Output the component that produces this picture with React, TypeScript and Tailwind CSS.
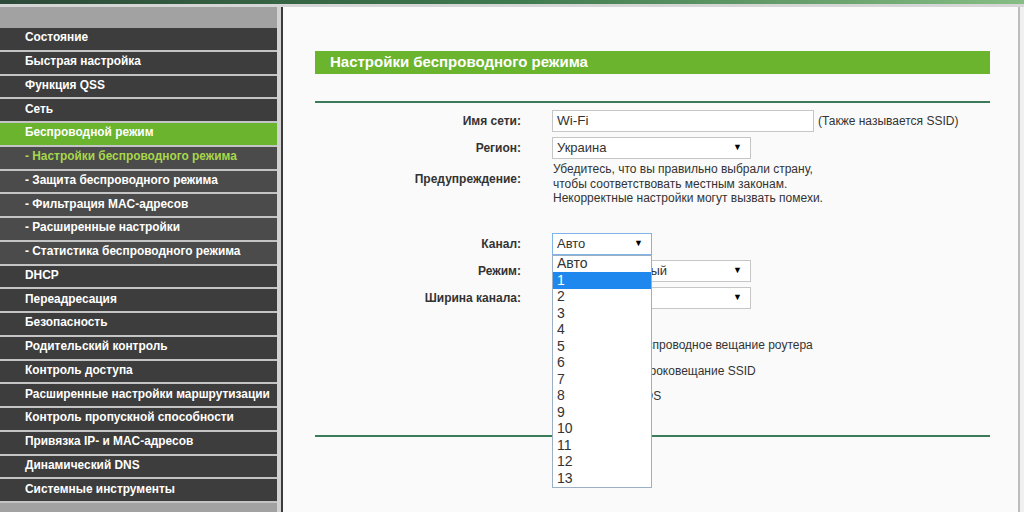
import React from "react";

const menu: { label: string; sub?: boolean; active?: boolean; current?: boolean }[] = [
  { label: "Состояние" },
  { label: "Быстрая настройка" },
  { label: "Функция QSS" },
  { label: "Сеть" },
  { label: "Беспроводной режим", active: true },
  { label: "- Настройки беспроводного режима", sub: true, current: true },
  { label: "- Защита беспроводного режима", sub: true },
  { label: "- Фильтрация MAC-адресов", sub: true },
  { label: "- Расширенные настройки", sub: true },
  { label: "- Статистика беспроводного режима", sub: true },
  { label: "DHCP" },
  { label: "Переадресация" },
  { label: "Безопасность" },
  { label: "Родительский контроль" },
  { label: "Контроль доступа" },
  { label: "Расширенные настройки маршрутизации" },
  { label: "Контроль пропускной способности" },
  { label: "Привязка IP- и MAC-адресов" },
  { label: "Динамический DNS" },
  { label: "Системные инструменты" },
];

const channels = ["Авто", "1", "2", "3", "4", "5", "6", "7", "8", "9", "10", "11", "12", "13"];

function Select({ value, width, focused }: { value: string; width: string; focused?: boolean }) {
  return (
    <div
      className={`flex h-[22px] items-center justify-between border bg-white pl-[4px] pr-[8px] text-[13px] text-[#333] ${width} ${
        focused ? "border-[#7eb4ea]" : "border-[#c6c6c6]"
      }`}
    >
      <span>{value}</span>
      <span className="text-[9px] text-black">▼</span>
    </div>
  );
}

function Label({ children, className = "" }: { children: React.ReactNode; className?: string }) {
  return <div className={`text-right text-[12px] font-bold text-[#333] ${className}`}>{children}</div>;
}

function Check({ text }: { text: string }) {
  return (
    <div className="flex h-[25.5px] items-center gap-[7px] text-[12px] text-[#333]">
      <span className="ml-[4px] h-[13px] w-[13px] border border-[#888] bg-white" />
      <span>{text}</span>
    </div>
  );
}

export default function App() {
  return (
    <div className="flex h-[512px] w-[1024px] flex-col overflow-hidden bg-[#fafafa] font-['Liberation_Sans',Arial,sans-serif]">
      <div className="h-[4px] bg-gradient-to-r from-[#2c4a38] via-[#3f7a4e] to-[#86bd84]" />
      <div className="h-[3px] bg-[#d6d6d6]" />
      <div className="flex flex-1">
        <aside className="w-[277px] bg-[#a2a2a2]">
          <div className="h-[21px]" />
          {menu.map((m) => (
            <div
              key={m.label}
              className={`flex h-[23.75px] items-center border-b-2 border-[#c4c4c4] pb-[1px] pl-[25px] text-[11.9px] font-bold ${
                m.active ? "bg-[#6ab42e] text-white" : m.sub ? "bg-[#4b4b4b]" : "bg-[#3d3d3d] text-white"
              } ${m.current ? "text-[#a6d84a]" : m.sub ? "text-white" : ""}`}
            >
              {m.label}
            </div>
          ))}
        </aside>
        <div className="w-[4px] bg-[#d2d2d2]" />
        <div className="w-[2px] bg-[#3a3a3a]" />
        <main className="flex-1 border-r-2 border-[#bdbdbd] pl-[32px] pr-[28px]">
          <div className="mt-[44px] flex h-[23px] items-center bg-[#6ab42e] pl-[15px] text-[15px] font-bold text-white">
            Настройки беспроводного режима
          </div>
          <div className="mt-[27px] h-[2px] bg-[#3b7a5a]" />

          <div className="mt-[7px] grid grid-cols-[206px_1fr] items-center gap-x-[31px] gap-y-[5px]">
            <Label>Имя сети:</Label>
            <div className="flex items-center gap-[4px]">
              <div className="flex h-[22px] w-[262px] items-center border border-[#c6c6c6] bg-white pl-[4px] text-[13.5px] text-[#333]">
                Wi-Fi
              </div>
              <span className="text-[12px] text-[#333]">(Также называется SSID)</span>
            </div>

            <Label>Регион:</Label>
            <Select value="Украина" width="w-[199px]" />

            <Label className="self-start pt-[6px]">Предупреждение:</Label>
            <div className="-mt-[2px] pl-[1px] text-[12px] leading-[14.5px] text-[#333]">
              Убедитесь, что вы правильно выбрали страну,
              <br />
              чтобы соответствовать местным законам.
              <br />
              Некорректные настройки могут вызвать помехи.
            </div>

            <div className="col-span-2 h-[17px]" />

            <Label>Канал:</Label>
            <div className="relative w-[100px]">
              <Select value="Авто" width="w-[100px]" focused />
              <div className="absolute left-0 top-full z-10 w-[100px] border border-[#9bb0c4] bg-white text-[14px] text-[#333]">
                {channels.map((c) => (
                  <div
                    key={c}
                    className={`flex h-[16.5px] items-center pl-[4px] ${c === "1" ? "bg-[#1e88ef] text-white" : ""}`}
                  >
                    {c}
                  </div>
                ))}
              </div>
            </div>

            <Label>Режим:</Label>
            <Select value="11bgn смешанный" width="w-[199px]" />

            <Label>Ширина канала:</Label>
            <Select value="Авто" width="w-[199px]" />

            <div className="col-span-2 h-[19px]" />

            <div />
            <div className="-mt-[5px] flex flex-col">
              <Check text="Включить беспроводное вещание роутера" />
              <Check text="Включить широковещание SSID" />
              <Check text="Включить WDS" />
            </div>
          </div>

          <div className="mt-[26px] h-[2px] bg-[#3b7a5a]" />
        </main>
        <div className="w-[4px] bg-[#f0f0f0]" />
      </div>
    </div>
  );
}
